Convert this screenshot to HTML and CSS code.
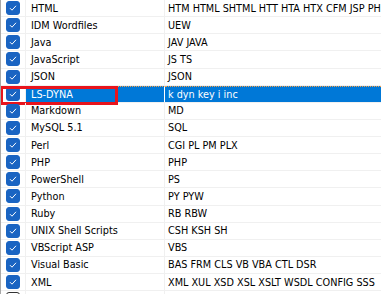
FILE: index.html
```html
<!DOCTYPE html>
<html lang="en">
  <head>
    <meta charset="UTF-8" />
    <title>Languages</title>
    <link rel="stylesheet" href="styles.css">
  </head>
  <body>
    <div class="list">
      <div class="row"><div class="chk"><span class="box on"></span></div><div class="name">HTML</div><div class="ext">HTM HTML SHTML HTT HTA HTX CFM JSP PHP</div></div>
      <div class="row"><div class="chk"><span class="box on"></span></div><div class="name">IDM Wordfiles</div><div class="ext">UEW</div></div>
      <div class="row"><div class="chk"><span class="box on"></span></div><div class="name">Java</div><div class="ext">JAV JAVA</div></div>
      <div class="row"><div class="chk"><span class="box on"></span></div><div class="name">JavaScript</div><div class="ext">JS TS</div></div>
      <div class="row"><div class="chk"><span class="box on"></span></div><div class="name">JSON</div><div class="ext">JSON</div></div>
      <div class="row selected"><div class="chk"><span class="box on"></span></div><div class="name">LS-DYNA</div><div class="ext">k dyn key i inc</div><div class="mark"></div></div>
      <div class="row"><div class="chk"><span class="box on"></span></div><div class="name">Markdown</div><div class="ext">MD</div></div>
      <div class="row"><div class="chk"><span class="box on"></span></div><div class="name">MySQL 5.1</div><div class="ext">SQL</div></div>
      <div class="row"><div class="chk"><span class="box on"></span></div><div class="name">Perl</div><div class="ext">CGI PL PM PLX</div></div>
      <div class="row"><div class="chk"><span class="box on"></span></div><div class="name">PHP</div><div class="ext">PHP</div></div>
      <div class="row"><div class="chk"><span class="box on"></span></div><div class="name">PowerShell</div><div class="ext">PS</div></div>
      <div class="row"><div class="chk"><span class="box on"></span></div><div class="name">Python</div><div class="ext">PY PYW</div></div>
      <div class="row"><div class="chk"><span class="box on"></span></div><div class="name">Ruby</div><div class="ext">RB RBW</div></div>
      <div class="row"><div class="chk"><span class="box on"></span></div><div class="name">UNIX Shell Scripts</div><div class="ext">CSH KSH SH</div></div>
      <div class="row"><div class="chk"><span class="box on"></span></div><div class="name">VBScript ASP</div><div class="ext">VBS</div></div>
      <div class="row"><div class="chk"><span class="box on"></span></div><div class="name">Visual Basic</div><div class="ext">BAS FRM CLS VB VBA CTL DSR</div></div>
      <div class="row"><div class="chk"><span class="box on"></span></div><div class="name">XML</div><div class="ext">XML XUL XSD XSL XSLT WSDL CONFIG SSS</div></div>
      <div class="row"><div class="chk"><span class="box"></span></div><div class="name"></div><div class="ext"></div></div>
    </div>
  </body>
</html>
```

FILE: styles.css
```css
body {
  margin: 0;
  background-color: #fff;
}
.list {
  width: 381px;
  height: 294px;
  overflow: hidden;
  box-sizing: border-box;
  border-left: 1px solid #a8a8a8;
  font-family: "DejaVu Sans", sans-serif;
  font-size: 9.7px;
  color: #000;
}
.row {
  position: relative;
  display: grid;
  grid-template-columns: 25px 139px 1fr;
  height: 17.125px;
  box-sizing: border-box;
  border-bottom: 1px solid #f0f0f0;
}
.chk {
  display: flex;
  align-items: center;
  padding-left: 5px;
  border-right: 1px solid #f0f0f0;
}
.name,
.ext {
  display: flex;
  align-items: center;
  white-space: nowrap;
  overflow: hidden;
}
.name {
  padding-left: 5px;
  border-right: 1px solid #f0f0f0;
}
.ext {
  padding-left: 3px;
}
.box {
  width: 14px;
  height: 14px;
  box-sizing: border-box;
  border: 1px solid #333;
  border-radius: 3px;
  background-color: #fff;
}
.box.on {
  border-color: #1a64c2;
  background-color: #1a64c2;
  background-image: url("data:image/svg+xml,%3Csvg xmlns='http://www.w3.org/2000/svg' width='12' height='12' viewBox='0 0 12 12'%3E%3Cpath d='M3 6.2 L5 8.2 L9 3.8' fill='none' stroke='%23fff' stroke-width='1'/%3E%3C/svg%3E");
  background-repeat: no-repeat;
  background-position: center;
}
.selected .name,
.selected .ext {
  background-color: #0078d7;
  color: #fff;
  border-top: 1px dotted #f5a04a;
}
.selected .name {
  border-right-color: #fff;
}
.mark {
  position: absolute;
  left: -1px;
  top: 0;
  width: 118px;
  height: 19px;
  box-sizing: border-box;
  border: 3px solid #e8141c;
}
```
